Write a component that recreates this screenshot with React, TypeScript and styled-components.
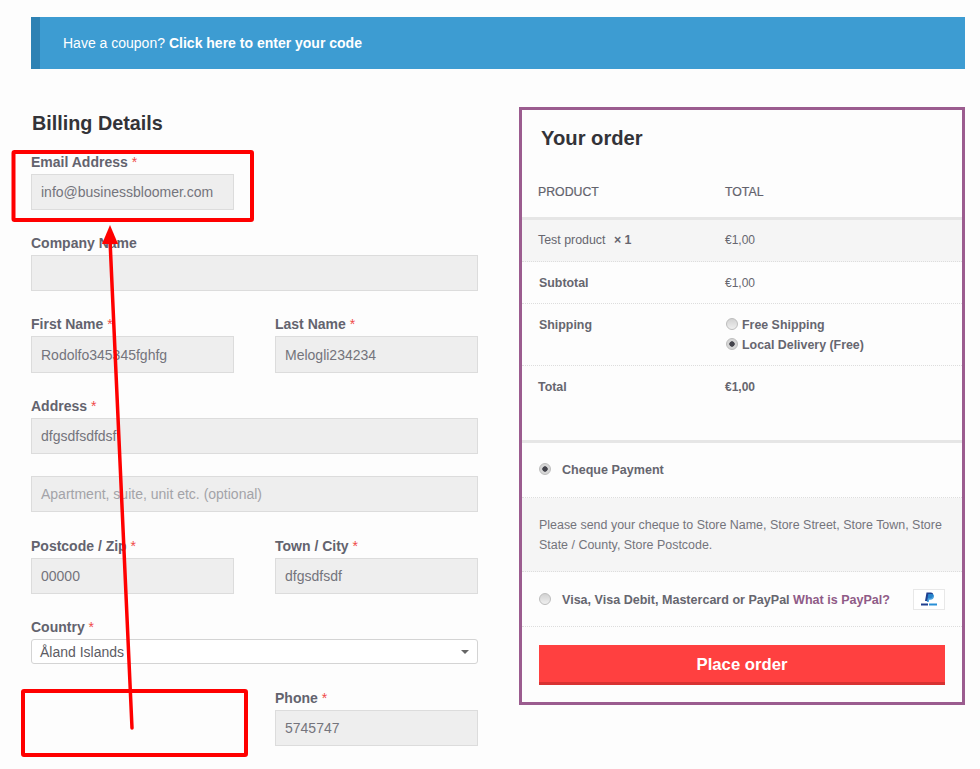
import React from "react";
import styled, { createGlobalStyle } from "styled-components";

const Global = createGlobalStyle`
  html, body { margin: 0; padding: 0; background: #fdfdfd; }
  body { font-family: "Liberation Sans", Arial, sans-serif; color: #5f5f6b; }
`;

const Page = styled.div`
  position: relative;
  width: 980px;
  height: 769px;
  overflow: hidden;
  box-sizing: border-box;
  padding: 17px 15px 0 31px;
`;

const Notice = styled.div`
  box-sizing: border-box;
  height: 52px;
  background: #3d9cd2;
  border-left: 9px solid #2e82b4;
  padding-left: 23px;
  display: flex;
  align-items: center;
  color: #fff;
  font-size: 14px;
  b { margin-left: 4px; }
`;

const Columns = styled.div`
  display: flex;
  justify-content: space-between;
  align-items: flex-start;
  margin-top: 38px;
`;

const Billing = styled.div`
  width: 447px;
  display: grid;
  grid-template-columns: 203px 203px;
  justify-content: space-between;
  row-gap: 21px;
`;

const Heading = styled.h3`
  grid-column: 1 / -1;
  margin: 4px 0 -21px 1px;
  height: 39px;
  line-height: 24px;
  font-size: 19.8px;
  font-weight: bold;
  color: #333338;
`;

const Field = styled.div<{ $wide?: boolean; $after?: number }>`
  grid-column: ${(p) => (p.$wide ? "1 / -1" : "auto")};
  display: flex;
  flex-direction: column;
  margin-bottom: ${(p) => p.$after ?? 0}px;
`;

const Label = styled.label`
  height: 24px;
  line-height: 24px;
  font-size: 14px;
  font-weight: bold;
  color: #63636e;
  span { color: #f04a4a; font-weight: normal; }
`;

const Input = styled.div<{ $muted?: boolean; $tall?: boolean }>`
  box-sizing: border-box;
  height: ${(p) => (p.$tall ? 37 : 36)}px;
  background: #eeeeee;
  border: 1px solid #dcdcdc;
  padding-left: 9px;
  display: flex;
  align-items: center;
  font-size: 14px;
  color: ${(p) => (p.$muted ? "#a3a3a8" : "#74747c")};
`;

const Select = styled.div`
  box-sizing: border-box;
  height: 25px;
  background: #fff;
  border: 1px solid #d4d4d4;
  border-radius: 3px;
  padding: 0 12px 0 8px;
  display: flex;
  align-items: center;
  justify-content: space-between;
  font-size: 14px;
  color: #5c5c64;
  i {
    width: 0; height: 0;
    border-left: 4px solid transparent;
    border-right: 4px solid transparent;
    border-top: 4px solid #666;
    margin-right: -4px;
  }
`;

const Order = styled.div`
  box-sizing: border-box;
  width: 446px;
  height: 598px;
  border: 3px solid #9b5c8f;
  background: #fdfdfd;
`;

const OrderTitle = styled.h3`
  margin: 0;
  height: 56px;
  padding: 16px 0 0 19px;
  box-sizing: border-box;
  line-height: 24px;
  font-size: 20.2px;
  font-weight: bold;
  color: #333338;
`;

const Row = styled.div<{ $h: number; $shade?: boolean; $line?: "solid" | "dotted"; $lift?: number }>`
  box-sizing: border-box;
  height: ${(p) => p.$h}px;
  display: grid;
  grid-template-columns: 187px 1fr;
  padding-left: 16px;
  padding-bottom: ${(p) => p.$lift ?? 0}px;
  align-items: center;
  font-size: 12.4px;
  color: #66666f;
  background: ${(p) => (p.$shade ? "#f5f5f5" : "transparent")};
  border-bottom: ${(p) =>
    p.$line === "solid" ? "3px solid #e6e6e6" : "1px dotted #dddddd"};
`;

const Head = styled.span`
  font-size: 12.3px;
  color: #62626c;
  -webkit-text-stroke: 0.2px #62626c;
`;

const Amount = styled.span<{ $strong?: boolean }>`
  font-size: 12px;
  color: #66666f;
  font-weight: ${(p) => (p.$strong ? "bold" : "normal")};
`;

const RowLabel = styled.b`
  padding-left: 1px;
`;

const TopLabel = styled.b<{ $flush?: boolean }>`
  align-self: start;
  padding-top: 14px;
  padding-left: ${(p) => (p.$flush ? 0 : 1)}px;
`;

const TopAmount = styled(Amount)`
  align-self: start;
  padding-top: 14px;
`;

const Qty = styled.b`
  margin-left: 5px;
  color: #66666f;
`;

const ShipOptions = styled.div`
  display: flex;
  flex-direction: column;
  align-self: start;
  padding-top: 11px;
`;

const ShipOption = styled.div`
  height: 20px;
  display: flex;
  align-items: center;
  gap: 4px;
  padding-left: 1px;
  font-weight: bold;
  font-size: 12.4px;
`;

const Radio = styled.span<{ $on?: boolean }>`
  box-sizing: border-box;
  flex: none;
  width: 12px;
  height: 12px;
  border-radius: 50%;
  margin-top: -2px;
  border: 1px solid #bdbdbd;
  background: ${(p) =>
    p.$on
      ? "radial-gradient(circle, #44444c 0 2.4px, #d6d6d6 3px)"
      : "linear-gradient(#d2d2d2, #efefef)"};
`;

const PayRow = styled.div<{ $h: number; $drop?: number }>`
  box-sizing: border-box;
  height: ${(p) => p.$h}px;
  padding: ${(p) => p.$drop ?? 0}px 17px 0;
  display: flex;
  align-items: center;
  gap: 11px;
  font-size: 12.55px;
  font-weight: bold;
  color: #66666f;
  border-bottom: 1px dotted #dddddd;
  a { color: #8f5b87; text-decoration: none; }
`;

const PayText = styled.span`
  flex: 1;
  white-space: nowrap;
`;

const Description = styled.div`
  box-sizing: border-box;
  height: 74px;
  padding: 17px 17px 0;
  background: #f5f5f5;
  border-bottom: 1px dotted #dddddd;
  font-size: 12.45px;
  line-height: 20px;
  color: #74747c;
`;

const PayBadge = styled.span`
  box-sizing: border-box;
  flex: none;
  width: 32px;
  height: 21px;
  background: #fff;
  border: 1px solid #e8e8e8;
  display: flex;
  align-items: center;
  justify-content: center;
`;

const ButtonWrap = styled.div`
  padding: 18px 17px 0;
`;

const PlaceOrder = styled.button`
  box-sizing: border-box;
  display: block;
  width: 100%;
  height: 40px;
  border: 0;
  border-bottom: 3px solid #d83232;
  background: #ff4040;
  color: #fff;
  font-family: inherit;
  font-size: 16.7px;
  font-weight: bold;
  padding: 3px 0 0;
`;

const Annotations = styled.svg`
  position: absolute;
  left: 0;
  top: 0;
  pointer-events: none;
`;

const Req = () => <span> *</span>;

export default function App() {
  return (
    <Page>
      <Global />
      <Notice>
        Have a coupon? <b>Click here to enter your code</b>
      </Notice>
      <Columns>
        <Billing>
          <Heading>Billing Details</Heading>
          <Field>
            <Label>Email Address<Req /></Label>
            <Input>info@businessbloomer.com</Input>
          </Field>
          <div />
          <Field $wide>
            <Label>Company Name</Label>
            <Input />
          </Field>
          <Field>
            <Label>First Name<Req /></Label>
            <Input $tall>Rodolfo345345fghfg</Input>
          </Field>
          <Field>
            <Label>Last Name<Req /></Label>
            <Input $tall>Melogli234234</Input>
          </Field>
          <Field $wide $after={1}>
            <Label>Address<Req /></Label>
            <Input>dfgsdfsdfdsf</Input>
          </Field>
          <Field $wide $after={1}>
            <Input $muted>Apartment, suite, unit etc. (optional)</Input>
          </Field>
          <Field>
            <Label>Postcode / Zip<Req /></Label>
            <Input>00000</Input>
          </Field>
          <Field>
            <Label>Town / City<Req /></Label>
            <Input>dfgsdfsdf</Input>
          </Field>
          <Field $wide $after={1}>
            <Label>Country<Req /></Label>
            <Select>Åland Islands<i /></Select>
          </Field>
          <div />
          <Field>
            <Label>Phone<Req /></Label>
            <Input>5745747</Input>
          </Field>
        </Billing>
        <Order>
          <OrderTitle>Your order</OrderTitle>
          <Row $h={54} $line="solid">
            <Head>PRODUCT</Head>
            <Head>TOTAL</Head>
          </Row>
          <Row $h={42} $shade $lift={1}>
            <span>Test product <Qty>× 1</Qty></span>
            <Amount>€1,00</Amount>
          </Row>
          <Row $h={42}>
            <RowLabel>Subtotal</RowLabel>
            <Amount>€1,00</Amount>
          </Row>
          <Row $h={62}>
            <TopLabel>Shipping</TopLabel>
            <ShipOptions>
              <ShipOption><Radio />Free Shipping</ShipOption>
              <ShipOption><Radio $on />Local Delivery (Free)</ShipOption>
            </ShipOptions>
          </Row>
          <Row $h={77} $line="solid">
            <TopLabel $flush>Total</TopLabel>
            <TopAmount $strong>€1,00</TopAmount>
          </Row>
          <PayRow $h={55}>
            <Radio $on />
            <PayText>Cheque Payment</PayText>
          </PayRow>
          <Description>
            Please send your cheque to Store Name, Store Street, Store Town, Store State / County, Store Postcode.
          </Description>
          <PayRow $h={55} $drop={1}>
            <Radio />
            <PayText>Visa, Visa Debit, Mastercard or PayPal <a>What is PayPal?</a></PayText>
            <PayBadge>
              <svg width="18" height="15" viewBox="0 0 18 15">
                <path d="M6.5 0.5h4.2c1.9 0 2.8 1.2 2.4 2.9-.4 1.9-1.8 2.9-3.7 2.9H8.1L7.6 9H5Z" fill="#1f3f8f" />
                <path d="M8.3 2h3.3c1.9 0 2.8 1 2.4 2.8-.4 1.9-1.8 2.9-3.7 2.9H9.2L8.7 10H6.8Z" fill="#2a8fd6" opacity="0.85" />
                <rect x="1" y="11.5" width="7" height="2" fill="#1f3f8f" />
                <rect x="9" y="11.5" width="8" height="2" fill="#2a8fd6" />
              </svg>
            </PayBadge>
          </PayRow>
          <ButtonWrap>
            <PlaceOrder>Place order</PlaceOrder>
          </ButtonWrap>
        </Order>
      </Columns>
      <Annotations width="980" height="769" viewBox="0 0 980 769">
        <rect x="13.5" y="152" width="238.5" height="68" fill="none" stroke="#ff0000" strokeWidth="4" rx="1" />
        <rect x="23" y="691" width="223" height="64" fill="none" stroke="#ff0000" strokeWidth="4" rx="1" />
        <line x1="132" y1="728" x2="110" y2="240" stroke="#ff0000" strokeWidth="3.5" strokeLinecap="round" />
        <path d="M110 225 L118 244 L102 244 Z" fill="#ff0000" />
      </Annotations>
    </Page>
  );
}
